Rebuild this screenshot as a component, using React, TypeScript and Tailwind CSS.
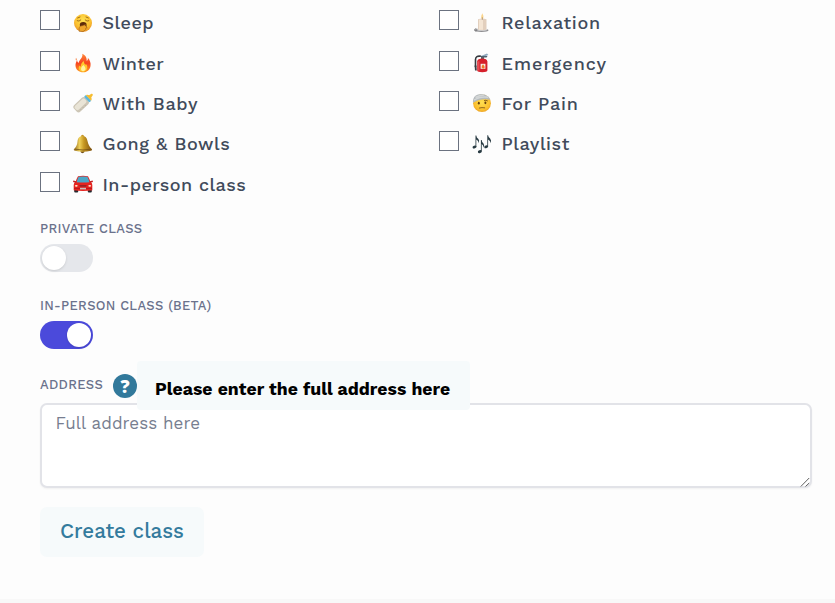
import type { ReactNode } from "react";

function Sleepy() {
  return (
    <svg viewBox="0 0 20 20" className="size-5">
      <defs>
        <radialGradient id="face" cx="50%" cy="35%" r="65%">
          <stop offset="0" stopColor="#ffe254" />
          <stop offset=".65" stopColor="#fbc02f" />
          <stop offset="1" stopColor="#e8912a" />
        </radialGradient>
      </defs>
      <circle cx="10" cy="10" r="9" fill="url(#face)" />
      <path d="M4.2 7.8Q6 9 7.8 7M12.2 7Q14 9 15.8 7.8M4.6 5L7 4M13 4L15.4 5" fill="none" stroke="#8a5510" strokeWidth=".8" strokeLinecap="round" />
      <ellipse cx="10.2" cy="11.8" rx="3.4" ry="2.8" fill="#5e2c0b" />
      <path d="M6 18.2L6.2 14.8Q7 12.4 9 12.8L12.5 11.6L12 12.8L14 13L13 14L14.3 14.8L12.6 15.4L12.8 16.6L10 18.6Z" fill="#efa62c" stroke="#8c4f12" strokeWidth=".5" />
    </svg>
  );
}

function Flame() {
  return (
    <svg viewBox="0 0 20 20" className="size-5">
      <defs>
        <linearGradient id="flame" x1="0" y1="0" x2="0" y2="1">
          <stop offset="0" stopColor="#ff8a3a" />
          <stop offset=".5" stopColor="#f6431f" />
          <stop offset="1" stopColor="#ff9d20" />
        </linearGradient>
      </defs>
      <path d="M9.3 .8C13 2.5 14 5.5 13.7 8C15 7.3 15 5.8 14.8 4.8C17 7.2 18 10 17.5 13C16.8 17 14 19.3 10.2 19.3C6 19.3 2.8 17 2.5 12.8C2.3 10.4 3.3 8.5 4.2 7.2C4.3 8.6 4.8 9.3 5.8 9.8C5.8 7 10.3 5.2 9.3 .8Z" fill="url(#flame)" />
      <path d="M3 4.8Q4.4 6 3.2 8Q2.3 6.5 3 4.8Z" fill="#f8742d" />
      <path d="M10.8 8C11 10.8 12.2 12 13.5 11.5C15.5 15 13.5 18.7 10 18.7C6.4 18.7 4.7 15.5 6.3 12.5Q7 13.7 8 13.3C7.7 11 9 9.2 10.8 8Z" fill="#ffc62e" />
      <path d="M10.5 12Q13.3 15 12.3 17Q10.5 19.2 8.2 17.2Q7.4 14.6 10.5 12Z" fill="#fff3a0" />
    </svg>
  );
}

function Bottle() {
  return (
    <svg viewBox="0 0 20 20" className="size-5">
      <g transform="rotate(47 10 10)">
        <rect x="5.5" y="4.6" width="9" height="15.8" rx="2.7" fill="#cdc6b6" />
        <rect x="6.6" y="6" width="5.4" height="13.5" rx="2" fill="#e9e4d6" />
        <path d="M12.8 10h1M12.8 13h1M12.8 16h1" stroke="#a39c90" strokeWidth=".5" />
        <rect x="6" y="2.4" width="8" height="2.6" rx="1" fill="#5cb8dd" />
        <path d="M6.1 2.6Q6.6 .7 8.4 .2L9-2.4Q10-3.8 11-2.4L11.6 .2Q13.4 .7 13.9 2.6Z" fill="#f6bd31" />
      </g>
    </svg>
  );
}

function Bell() {
  return (
    <svg viewBox="0 0 20 20" className="size-5">
      <defs>
        <linearGradient id="bell">
          <stop offset="0" stopColor="#8c651a" />
          <stop offset=".32" stopColor="#efd05a" />
          <stop offset=".55" stopColor="#c79822" />
          <stop offset="1" stopColor="#80520f" />
        </linearGradient>
      </defs>
      <circle cx="9.5" cy="2.2" r="1.5" fill="#c39427" />
      <circle cx="9.5" cy="17.1" r="2.1" fill="#72501a" />
      <path d="M9.4 2C6 2.2 4.8 4.7 4.5 7.5C4.2 11 3 13.2 .8 15.2Q.5 16.5 2 16.8Q10 18.5 17.8 16.8Q19.5 16.5 19 15.2C16.4 13 15.3 10.5 14.5 7C13.8 3.8 12.5 2 9.4 2Z" fill="url(#bell)" />
      <path d="M2 15.2Q10 16.8 18 15.2" fill="none" stroke="#755016" strokeWidth=".8" />
    </svg>
  );
}

function Car() {
  return (
    <svg viewBox="0 0 20 20" className="size-5">
      <rect x="1.2" y="14.2" width="4" height="4.3" rx="1" fill="#242a30" />
      <rect x="14.8" y="14.2" width="4" height="4.3" rx="1" fill="#242a30" />
      <path d="M5 2.3Q10 1.1 15 2.3Q16.4 4.5 17.2 7.6Q19.3 8.8 19.3 11V16.2Q10 17.6 .7 16.2V11Q.7 8.8 2.8 7.6Q3.6 4.5 5 2.3Z" fill="#e6231f" />
      <path d="M5.6 2.8Q10 2 14.4 2.8Q15.8 5.2 16.4 8.2Q10 9 3.6 8.2Q4.2 5.2 5.6 2.8Z" fill="#4ba7c7" />
      <path d="M.2 7.3L3 8M19.8 7.3L17 8" stroke="#c32022" strokeWidth="1.5" />
      <ellipse cx="3.3" cy="11.8" rx="1.4" ry=".9" fill="#ffe9cf" />
      <ellipse cx="16.7" cy="11.8" rx="1.4" ry=".9" fill="#ffe9cf" />
      <path d="M6.2 11.2H13.8L13 12.5H7Z" fill="#7d2227" />
      <path d="M1 14.4H19" stroke="#a9151b" strokeWidth=".8" />
      <rect x="7" y="13.8" width="6" height="1.6" fill="#c9c1bd" />
    </svg>
  );
}

function Candle() {
  return (
    <svg viewBox="0 0 20 20" className="size-5">
      <ellipse cx="9.5" cy="17.3" rx="7" ry="1.7" fill="#8e8e91" />
      <ellipse cx="9.8" cy="16.6" rx="5.8" ry="1.2" fill="#dedee0" />
      <circle cx="3.8" cy="16.9" r="1.2" fill="none" stroke="#77777a" strokeWidth=".8" />
      <path d="M6 6.2Q10.3 4.7 14.5 6.2V16.5Q10.2 18 6 16.5Z" fill="#e2cfbd" />
      <path d="M7 6.5H11V16.8H7Z" fill="#f4e5d4" />
      <path d="M10.3 .3Q12.2 3.6 11.3 5.3Q10.3 6.4 9.3 5.3Q8.6 3.5 10.3 .3Z" fill="#fbd58b" />
      <path d="M10.3 4.3V6.8" stroke="#8a6c54" strokeWidth=".6" />
    </svg>
  );
}

function Extinguisher() {
  return (
    <svg viewBox="0 0 20 20" className="size-5">
      <path d="M9 3.3Q3.6 2.4 3.5 6.6V14" fill="none" stroke="#35383d" strokeWidth="1.6" />
      <path d="M2.6 12.5H4.5L4.8 17.5H3Z" fill="#393b40" />
      <path d="M8.3 3.2L15 .6L16.4 2L10.5 4.2Z" fill="#8fa9bf" />
      <path d="M9 3H15.5L14.6 4.6H9Z" fill="#536270" />
      <rect x="9" y="3.7" width="3" height="3" fill="#596068" />
      <path d="M5.2 8.3Q5.6 5.6 10.3 5.6Q15 5.6 15.4 8.5V17.6Q15.2 19.3 10.3 19.3Q5.4 19.3 5.2 17.6Z" fill="#d6202b" />
      <path d="M6.8 8.3V17.5" stroke="#f1666b" strokeWidth=".9" />
      <rect x="8.6" y="10.8" width="4.8" height="5" fill="#f5eee4" />
      <path d="M11 11.2Q13.3 13.7 12.4 15Q11 16.2 9.7 14.8Q9.2 13.1 11 11.2Z" fill="#f07927" />
    </svg>
  );
}

function Bandage() {
  return (
    <svg viewBox="0 0 20 20" className="size-5">
      <defs>
        <radialGradient id="hurt" cx="50%" cy="45%" r="60%">
          <stop offset="0" stopColor="#ffdf51" />
          <stop offset=".7" stopColor="#fbc02e" />
          <stop offset="1" stopColor="#e79b28" />
        </radialGradient>
      </defs>
      <circle cx="10" cy="10.2" r="8.9" fill="url(#hurt)" />
      <path d="M.9 8.5Q1 3 6 1.4Q12-.3 16.8 4L18.4 6.8Q9 5 1.1 9.8Z" fill="#b5babd" />
      <path d="M2 7.2Q8 3 16.4 4.2M3.5 4.5Q8 1.7 12.3 1.9" fill="none" stroke="#d3d6d6" strokeWidth="1.5" />
      <ellipse cx="6.8" cy="10.2" rx="1" ry="1.4" fill="#65400f" />
      <ellipse cx="13.4" cy="9.8" rx="1" ry="1.4" fill="#65400f" />
      <path d="M12.4 7.4Q14 6.8 15.5 7.8M7.3 15Q10 14.2 12.7 14.8" fill="none" stroke="#754c15" strokeWidth=".8" strokeLinecap="round" />
    </svg>
  );
}

function Notes() {
  return (
    <svg viewBox="0 0 20 20" className="size-5" fill="#283a42">
      <ellipse cx="2.5" cy="13" rx="2" ry="1.4" transform="rotate(-20 2.5 13)" />
      <ellipse cx="7.8" cy="17.6" rx="2" ry="1.4" transform="rotate(-20 7.8 17.6)" />
      <ellipse cx="14.2" cy="12.7" rx="2" ry="1.4" transform="rotate(-20 14.2 12.7)" />
      <path d="M3.5 1.5H4.3Q4.4 3.5 6.4 5Q7.8 6.6 6.6 9.2Q6.7 6.7 4.3 5.5V13H3.5ZM8.9 6H9.7Q9.8 8 11.5 9.5Q12.8 11.2 11.6 13.8Q11.5 11 9.7 10V17.6H8.9ZM15.3 1.3H16.1Q16.2 3.2 18.1 4.6Q19.8 6.2 18.5 9.2Q18.4 6.4 16.1 5.4V12.7H15.3Z" />
    </svg>
  );
}

function Option({ icon, children, tracking = "tracking-wide" }: { icon: ReactNode; children: string; tracking?: string }) {
  return (
    <label className="flex h-[40.4px] items-center">
      <input type="checkbox" className="size-5 shrink-0 appearance-none border border-[#6b7280] bg-white" />
      <span className="mt-[5px] ml-[13px] shrink-0">{icon}</span>
      <span className={`mt-[6px] ml-[9.5px] text-lg leading-6 font-medium whitespace-nowrap text-[#414b5b] ${tracking}`}>{children}</span>
    </label>
  );
}

function Toggle({ on = false }: { on?: boolean }) {
  return (
    <button
      role="switch"
      aria-checked={on}
      className={`flex h-[28.5px] w-[52.5px] items-center rounded-full px-[2px] ${on ? "justify-end bg-[#4b4adb]" : "justify-start bg-[#e5e7eb]"}`}
    >
      <span className="size-6 rounded-full bg-white shadow-sm" />
    </button>
  );
}

export default function App() {
  return (
    <main className="flex h-[603px] w-[835px] flex-col overflow-hidden bg-[#fdfdfd] font-['Work_Sans','Inter',sans-serif]">
      <div className="grid h-[202px] grid-cols-[399px_1fr] pl-10">
        <div>
          <Option icon={<Sleepy />}>Sleep</Option>
          <Option icon={<Flame />}>Winter</Option>
          <Option icon={<Bottle />} tracking="tracking-[0.65px]">With Baby</Option>
          <Option icon={<Bell />} tracking="tracking-[0.6px]">Gong &amp; Bowls</Option>
          <Option icon={<Car />}>In-person class</Option>
        </div>
        <div>
          <Option icon={<Candle />} tracking="tracking-[0.7px]">Relaxation</Option>
          <Option icon={<Extinguisher />} tracking="tracking-[1px]">Emergency</Option>
          <Option icon={<Bandage />} tracking="tracking-[0.7px]">For Pain</Option>
          <Option icon={<Notes />} tracking="tracking-[0.55px]">Playlist</Option>
        </div>
      </div>

      <div className="h-[77px] pt-[17px] pl-10">
        <div className="mb-[4.5px] text-[13px] leading-5 font-medium tracking-[0.3px] text-[#6b728c]">PRIVATE CLASS</div>
        <Toggle />
      </div>
      <div className="h-[82px] pt-[17px] pl-10">
        <div className="mb-[4.5px] text-[13px] leading-5 font-medium tracking-[0.3px] text-[#6b728c]">IN-PERSON CLASS (BETA)</div>
        <Toggle on />
      </div>

      <div className="relative z-10 flex h-[42px] items-start pl-10">
        <span className="mt-[14px] w-[73px] text-[13px] leading-5 font-medium tracking-[0.3px] text-[#6b728c]">ADDRESS</span>
        <span className="mt-[12.5px] flex size-6 shrink-0 items-center justify-center rounded-full bg-[#32799b] font-['Open_Sans',sans-serif] text-[18px] leading-none font-extrabold text-white">?</span>
        <div className="h-[49px] w-[333px] shrink-0 rounded-[4px] bg-[#f6fafb] pt-4 pl-[18px] text-[17.6px] leading-6 font-bold tracking-[0.03px] whitespace-nowrap text-black">
          Please enter the full address here
        </div>
      </div>
      <div className="relative ml-10 h-[85px] w-[772px] shrink-0">
        <textarea
          placeholder="Full address here"
          className="block size-full resize-none rounded-[7px] border-2 border-[#e2e3e8] bg-white px-[13.5px] py-[5.5px] text-[17px] leading-6 tracking-[0.05px] shadow-xs outline-none placeholder:text-[#777e90]"
        />
        <svg viewBox="0 0 10 10" className="absolute right-[2px] bottom-[1px] size-[10px]" fill="none" stroke="#5f5f5f" strokeWidth="1">
          <path d="M.8 9.5L9.2 1M5.5 9.5L9.2 6" />
        </svg>
      </div>
      <button className="mt-[19px] ml-10 h-[50px] w-[164px] shrink-0 rounded-[7px] bg-[#f6fafb] pb-[3px] text-[20.5px] leading-7 font-medium whitespace-nowrap text-[#347b9d]">
        Create class
      </button>
      <div className="mt-auto h-1 shrink-0 bg-[#f8f8f8]" />
    </main>
  );
}
